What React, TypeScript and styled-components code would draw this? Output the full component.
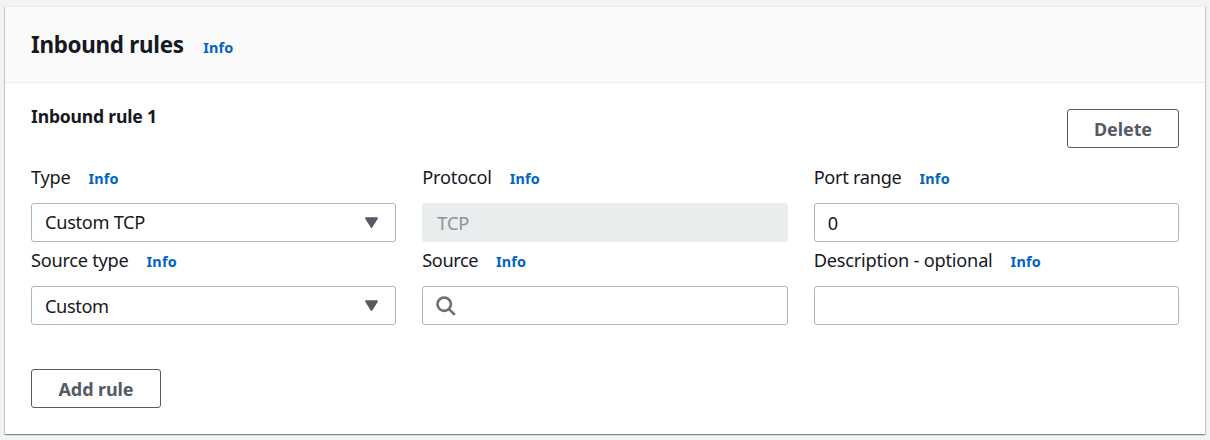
import React from "react";
import styled, { createGlobalStyle } from "styled-components";

const GlobalStyle = createGlobalStyle`
  *, *::before, *::after { box-sizing: border-box; }
  body {
    margin: 0;
    background: #f2f3f3;
    color: #16191f;
    font-family: "Noto Sans", "Open Sans", sans-serif;
    font-size: 18.2px;
    line-height: 28px;
  }
`;

const Page = styled.main`
  height: 440px;
  padding: 6px 5px;
  overflow: hidden;
`;

const Card = styled.section`
  height: 428px;
  background: #fff;
  border-top: 1px solid #eaeded;
  box-shadow: 0 1px 1px 0 rgba(0, 28, 36, 0.3), 1px 1px 1px 0 rgba(0, 28, 36, 0.15),
    -1px 1px 1px 0 rgba(0, 28, 36, 0.15);
`;

const Header = styled.header`
  display: flex;
  align-items: baseline;
  height: 76px;
  padding: 22px 26px 0;
  background: #fafafa;
  border-bottom: 1px solid #eaeded;
`;

const Text = styled.span<{ $tracking?: number }>`
  letter-spacing: ${({ $tracking = 0 }) => $tracking}px;
  white-space: nowrap;
`;

const Title = styled(Text).attrs({ as: "h2" })`
  margin: 0;
  font-size: 22.4px;
  font-weight: 700;
  line-height: 32px;
`;

const InfoLink = styled.a`
  margin-left: 18px;
  color: #0064c4;
  font-size: 14.4px;
  font-weight: 700;
  letter-spacing: 0.2px;
  cursor: pointer;
`;

const HeaderInfo = styled(InfoLink)`
  margin-left: 19.5px;
`;

const Body = styled.div`
  padding: 19px 26px 0;
`;

const RuleHeader = styled.div`
  display: flex;
  justify-content: space-between;
  align-items: flex-start;
  height: 61px;
`;

const RuleTitle = styled(Text).attrs({ as: "h3" })`
  margin: 0;
  font-size: 17.6px;
  font-weight: 700;
`;

const Button = styled.button<{ $width: number; $top?: number }>`
  width: ${({ $width }) => $width}px;
  height: 39px;
  margin: ${({ $top = 0 }) => $top}px 0 0;
  padding: 0;
  background: #fff;
  border: 1px solid #545b64;
  border-radius: 3px;
  color: #545b64;
  font: 700 18px/28px "Noto Sans", "Open Sans", sans-serif;
  letter-spacing: -0.1px;
`;

const Fields = styled.div`
  display: grid;
  grid-template-columns: repeat(3, 1fr);
  grid-auto-rows: 83px;
  column-gap: 26px;
`;

const Field = styled.div`
  min-width: 0;
`;

const Label = styled.div`
  display: flex;
  align-items: baseline;
  height: 40px;
`;

const Control = styled.div<{ $disabled?: boolean }>`
  display: flex;
  align-items: center;
  justify-content: space-between;
  height: 39px;
  padding: 0 16px 0 ${({ $disabled }) => ($disabled ? 14 : 13)}px;
  background: ${({ $disabled }) => ($disabled ? "#eaeded" : "#fff")};
  border: 1px solid ${({ $disabled }) => ($disabled ? "#eaeded" : "#aab7b8")};
  border-radius: 3px;
  color: ${({ $disabled }) => ($disabled ? "#879596" : "#16191f")};
`;

const Value = styled(Text)<{ $raised?: boolean }>`
  padding-bottom: ${({ $raised }) => ($raised ? 2 : 0)}px;
`;

const Caret = () => (
  <svg width="15" height="12" viewBox="0 0 15 12" aria-hidden="true">
    <path d="M2 1.2h11L7.5 10z" fill="#545b64" stroke="#545b64" strokeWidth="1.8" strokeLinejoin="round" />
  </svg>
);

const SearchIcon = () => (
  <svg width="20" height="20" viewBox="0 0 20 20" fill="none" stroke="#687078" strokeWidth="2.6" aria-hidden="true">
    <circle cx="8.2" cy="8.2" r="6.7" />
    <path d="M12.8 12.8l6 6" />
  </svg>
);

interface FieldProps {
  label: string;
  tracking?: number;
  value?: string;
  valueTracking?: number;
  raised?: boolean;
  kind?: "select" | "search" | "input";
  disabled?: boolean;
}

const FormField = ({ label, tracking, value, valueTracking, raised, kind = "input", disabled }: FieldProps) => (
  <Field>
    <Label>
      <Text $tracking={tracking}>{label}</Text>
      <InfoLink>Info</InfoLink>
    </Label>
    <Control $disabled={disabled}>
      {kind === "search" && <SearchIcon />}
      {value && (
        <Value $tracking={valueTracking} $raised={raised}>
          {value}
        </Value>
      )}
      {kind === "select" && <Caret />}
    </Control>
  </Field>
);

export default function App() {
  return (
    <>
      <GlobalStyle />
      <Page>
        <Card>
          <Header>
            <Title $tracking={-0.28}>Inbound rules</Title>
            <HeaderInfo>Info</HeaderInfo>
          </Header>
          <Body>
            <RuleHeader>
              <RuleTitle $tracking={-0.2}>Inbound rule 1</RuleTitle>
              <Button $width={112} $top={7}>Delete</Button>
            </RuleHeader>
            <Fields>
              <FormField label="Type" tracking={-0.25} value="Custom TCP" valueTracking={-0.3} kind="select" raised />
              <FormField label="Protocol" tracking={-0.22} value="TCP" valueTracking={-0.2} disabled />
              <FormField label="Port range" tracking={-0.3} value="0" />
              <FormField label="Source type" tracking={-0.26} value="Custom" valueTracking={-0.4} kind="select" />
              <FormField label="Source" tracking={-0.45} kind="search" />
              <FormField label="Description - optional" tracking={-0.22} />
            </Fields>
            <Button $width={130} $top={40}>Add rule</Button>
          </Body>
        </Card>
      </Page>
    </>
  );
}
